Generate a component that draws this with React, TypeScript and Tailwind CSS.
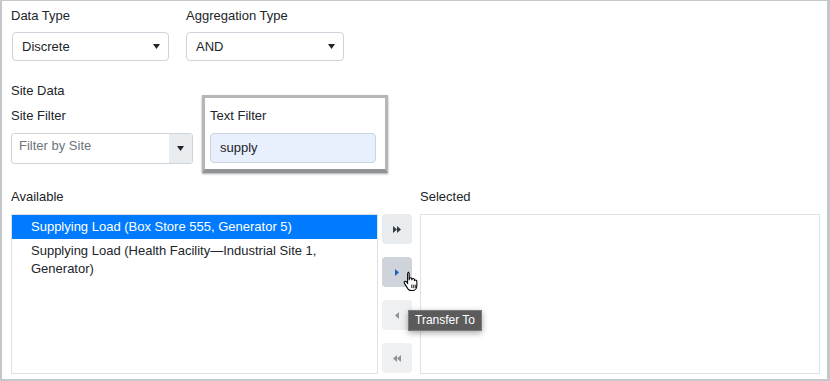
import React from "react";

const Caret = ({ className = "" }: { className?: string }) => (
  <svg width="7" height="5" viewBox="0 0 7 5" className={className}>
    <path d="M0 0 H7 L3.5 5 Z" fill="currentColor" />
  </svg>
);

const Tri = ({ dir, color }: { dir: "r" | "l"; color: string }) => (
  <svg width="4" height="7" viewBox="0 0 4 7">
    {dir === "r" ? <path d="M0 0 L4 3.5 L0 7 Z" fill={color} /> : <path d="M4 0 L0 3.5 L4 7 Z" fill={color} />}
  </svg>
);

const Hand = () => (
  <svg width="17" height="21" viewBox="0 0 16 20">
    <path
      d="M4.5 1.2c.8 0 1.3.6 1.3 1.4v6.1l.1-1.1c.1-.7.6-1.1 1.2-1.1.7 0 1.2.5 1.2 1.2v1l.1-.5c.1-.6.6-1 1.2-1 .7 0 1.2.5 1.2 1.2v1.1c.1-.5.6-.9 1.1-.9.7 0 1.2.5 1.2 1.2v4.2c0 2.6-1.8 4.6-4.3 4.6H7.6c-1.3 0-2.3-.6-3-1.6L1.3 11.8c-.5-.6-.4-1.4.2-1.8.6-.4 1.3-.3 1.8.3l1 1.3V2.6c0-.8.4-1.4 1.2-1.4z"
      fill="#fff"
      stroke="#000"
      strokeWidth="1"
    />
    <path d="M8.3 13v3.3M10.2 13v3.3M12.1 13v3.3" stroke="#000" strokeWidth="0.9" />
  </svg>
);

export default function App() {
  const font = { fontFamily: '"Liberation Sans", Arial, sans-serif' };
  return (
    <div
      className="w-[830px] h-[381px] bg-white border-l-2 border-t border-r-[3px] border-b-2 border-[#c5c8cb] text-[13px] leading-[20px] text-[#212529] overflow-hidden relative"
      style={font}
    >
      <div className="pl-[9px] pt-[5px]">
        {/* Row 1 */}
        <div className="flex gap-[17px]">
          <div className="w-[158px]">
            <div className="h-[20px]">Data Type</div>
            <div className="mt-[6px] ml-[1px] h-[29px] border border-[#ced4da] rounded-[4px] flex items-center justify-between pl-[9px] pr-[8px]">
              <span>Discrete</span>
              <Caret className="text-[#212529]" />
            </div>
          </div>
          <div className="w-[158px]">
            <div className="h-[20px]">Aggregation Type</div>
            <div className="mt-[6px] h-[29px] border border-[#ced4da] rounded-[4px] flex items-center justify-between pl-[9px] pr-[8px]">
              <span>AND</span>
              <Caret className="text-[#212529]" />
            </div>
          </div>
        </div>

        {/* Row 2 */}
        <div className="flex gap-[9px] mt-[20px]">
          <div className="w-[182px]">
            <div className="h-[20px]">Site Data</div>
            <div className="h-[20px] mt-[5px]">Site Filter</div>
            <div className="mt-[7px] h-[31px] border border-[#ced4da] rounded-[3px] flex">
              <div className="flex-1 pl-[7px] pt-[2px] text-[#6c757d]">Filter by Site</div>
              <div className="w-[23px] bg-[#e9ecef] flex items-center justify-center">
                <Caret className="text-[#212529]" />
              </div>
            </div>
          </div>
          <div className="mt-[14px] w-[186px] h-[78px] border-[3px] border-[#b3b7ba] border-b-[4px] border-b-[#8f9396] shadow-[0_1px_2px_rgba(0,0,0,0.35)] pl-[5px] pr-[9px] pt-[8px]">
            <div className="h-[20px]">Text Filter</div>
            <div className="mt-[7px] h-[30px] bg-[#e8f0fe] border border-[#cbd3de] rounded-[4px] flex items-center pl-[9px]">
              supply
            </div>
          </div>
        </div>

        {/* Transfer */}
        <div className="flex mt-[14px]">
          <div className="w-[367px]">
            <div className="h-[20px]">Available</div>
            <div className="mt-[7px] h-[160px] border border-[#dee2e6]">
              <div className="bg-[#007bff] text-white pl-[19px] py-[3px] leading-[18px]">
                Supplying Load (Box Store 555, Generator 5)
              </div>
              <div className="pl-[19px] pr-[20px] py-[3px] leading-[18px]">
                Supplying Load (Health Facility—Industrial Site 1, Generator)
              </div>
            </div>
          </div>
          <div className="ml-[4px] mt-[27px] flex flex-col gap-[13px] w-[30px]">
            <div className="h-[30px] rounded-[4px] bg-[#e9ecef] flex items-center justify-center gap-0">
              <Tri dir="r" color="#343a40" />
              <Tri dir="r" color="#343a40" />
            </div>
            <div className="h-[30px] rounded-[4px] bg-[#cfd4da] flex items-center justify-center">
              <Tri dir="r" color="#1565c0" />
            </div>
            <div className="h-[30px] rounded-[4px] bg-[#eef0f2] flex items-center justify-center">
              <Tri dir="l" color="#8f9499" />
            </div>
            <div className="h-[30px] rounded-[4px] bg-[#eef0f2] flex items-center justify-center">
              <Tri dir="l" color="#8f9499" />
              <Tri dir="l" color="#8f9499" />
            </div>
          </div>
          <div className="ml-[8px] w-[400px]">
            <div className="h-[20px]">Selected</div>
            <div className="mt-[7px] h-[160px] border border-[#dee2e6]"></div>
          </div>
        </div>
      </div>

      {/* Tooltip */}
      <div
        className="absolute left-[406px] top-[309px] h-[21px] px-[6px] bg-[#5b5b5b] border border-[#7a7a7a] text-white text-[12px] leading-[19px] shadow-[0_2px_6px_rgba(0,0,0,0.35)]"
        style={font}
      >
        Transfer To
      </div>
      {/* Cursor */}
      <div className="absolute left-[401px] top-[270px]">
        <Hand />
      </div>
    </div>
  );
}
